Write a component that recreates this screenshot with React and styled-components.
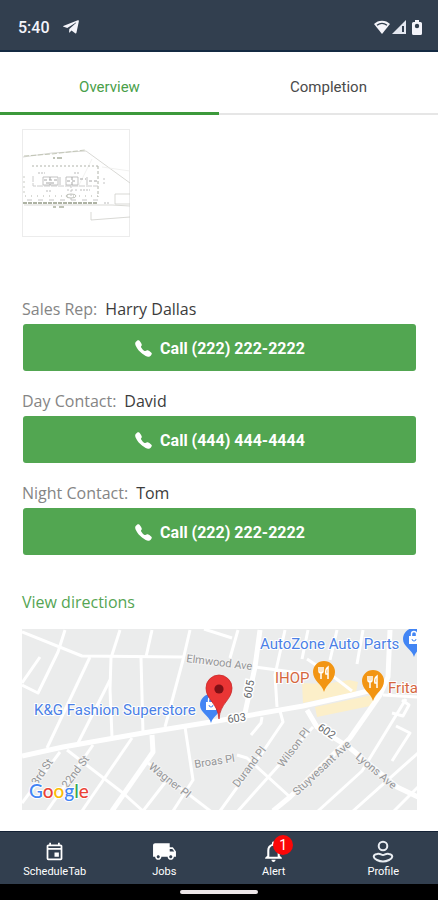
import React, { useState } from 'react'
import styled, { createGlobalStyle } from 'styled-components'
import { FaTelegramPlane } from 'react-icons/fa'
import { IoCall } from 'react-icons/io5'
import { MdOutlineEvent, MdLocalShipping, MdNotificationsNone } from 'react-icons/md'

const contacts = [
  { label: 'Sales Rep:', name: 'Harry Dallas', phone: '(222) 222-2222' },
  { label: 'Day Contact:', name: 'David', phone: '(444) 444-4444' },
  { label: 'Night Contact:', name: 'Tom', phone: '(222) 222-2222' },
]

const tabs = ['Overview', 'Completion']

const streets = [
  '0,3 60,27 161,28',
  '43,1 36,23 16,64 0,56',
  '18,28 0,54',
  '68,28 25,119',
  '98,1 89,29 88,60 90,108',
  '88,51 56,114',
  '130,1 124,28',
  '119,29 121,104',
  '168,1 161,31 143,98',
  '45,121 101,164 121,182',
  '38,123 0,174',
  '71,116 25,182',
  '110,109 60,182',
  '145,151 121,182',
  '163,98 171,151 151,182',
  '126,134 191,184',
  '182,0 210,9',
  '216,1 208,29',
  '233,38 285,45',
  '263,1 253,46 255,78',
  '286,1 280,30',
  '315,1 308,31',
  '341,1 335,35',
  '285,30 312,48 330,62',
  '361,66 396,68',
  '240,88 239,94 229,106',
  '258,82 261,93 240,124 198,182',
  '291,98 216,182',
  '215,126 225,129 268,168',
  '380,71 387,76 381,87 370,84',
  '374,97 388,104 370,132',
  '384,70 340,142 296,182',
  '396,124 331,182',
  '396,158 372,182',
]

const mainRoads = [
  '0,127 41,118 121,104 195,92 281,77 330,66 362,58',
  '238,1 233,38 223,84',
  '130,106 131,123 90,182',
  '368,1 366,48 358,66 328,109 268,168 251,182',
  '285,81 295,98 328,119 375,158 396,168',
]

function WifiIcon() {
  return (
    <svg width="16" height="14" viewBox="0 0 16 14" aria-hidden="true">
      <path d="M0 4C4-.5 12-.5 16 4L8 14Z" fill="#f4f4fa" />
      <path d="M3 5.2C6 3 10 3 13 5.2" fill="none" stroke="#323f4f" strokeWidth="1.4" />
    </svg>
  )
}

function SignalIcon() {
  return (
    <svg width="14" height="14" viewBox="0 0 14 14" aria-hidden="true">
      <path d="M0 14L14 0V14Z" fill="#e4e7f0" />
      <path d="M10 6h2v6h-2z" fill="#323f4f" />
    </svg>
  )
}

function BatteryIcon() {
  return (
    <svg width="10" height="15" viewBox="0 0 10 15" aria-hidden="true">
      <path d="M3 0h4v2h1.5Q10 2 10 3.5V13.5Q10 15 8.5 15h-7Q0 15 0 13.5V3.5Q0 2 1.5 2H3Z" fill="#f4f4fa" />
      <circle cx="5" cy="6" r="2.2" fill="#323f4f" />
    </svg>
  )
}

function ProfileIcon() {
  return (
    <svg width="22" height="24" viewBox="0 0 22 24" fill="none" stroke="#e9edf2" strokeWidth="2" aria-hidden="true">
      <circle cx="11" cy="6" r="4.3" />
      <path d="M5 14C8 13 9 15 11 15S14 13 17 14C22 15 20.5 18.5 17 20Q11 23 5 20C1.5 18.5 0 15 5 14Z" />
    </svg>
  )
}

function SitePlan() {
  return (
    <Plan viewBox="0 0 108 108" role="img" aria-label="Site plan">
      <rect x=".5" y=".5" width="107" height="107" fill="#fff" stroke="#ececec" />
      <g fill="none" stroke="#cfcfca" strokeWidth=".8">
        <path d="M1 28L30 24L64 22L108 54" />
        <path d="M2 27L30 25L63 21" stroke="#b8bda9" strokeDasharray="5 2" />
        <path d="M70 30L56 58M80 38L108 42" stroke="#eeeeec" />
        <path d="M93 75V65H108M93 75H108" />
        <path d="M69 83V91L108 88" />
        <path d="M2 76H90L108 77" />
      </g>
      <g fill="none" stroke="#b0b3aa" strokeWidth="1">
        <path d="M10 37H76" strokeDasharray="2 2" />
        <path d="M76 37V68" strokeDasharray="3 2" />
        <path d="M2 47V67" stroke="#c9cbc4" strokeDasharray="2 3" />
        <path d="M3 67H76" strokeDasharray="1 5" />
        <path d="M1 74H76" stroke="#949a87" strokeWidth="1.5" strokeDasharray="4 1" />
        <path d="M5 71H76" stroke="#c4c4c4" strokeDasharray="5 6" />
        <path d="M11 47V57H76" stroke="#ccc" strokeDasharray="6 1" />
        <path d="M21 48H36V56H21ZM44 48H56V56H44ZM38 48V56M65 48V56" stroke="#b4b4b4" strokeWidth=".8" />
        <path d="M22 51H35M24 54H34M28 48V56M45 52H55M50 48V56M58 50H64M67 52H75" stroke="#a6a6a6" strokeDasharray="3 2" />
        <path d="M16 44H23M52 44H57M24 62H30M58 61H68M82 74H88" stroke="#bbb" strokeDasharray="2 1" />
        <path d="M31 29H33M35 29H40M31 78H34M37 78H42" stroke="#aab09e" strokeWidth="1.5" />
        <ellipse cx="49" cy="67" rx="5" ry="2" strokeWidth=".8" />
        <path d="M49 57V72M45 61H55M82 49V55" stroke="#c4c4c4" strokeDasharray="2 2" />
      </g>
    </Plan>
  )
}

function FoodPin({ x, y }) {
  return (
    <g transform={`translate(${x} ${y})`}>
      <path d="M0 0C-2-8-11-11-11-20A11 11 0 0 1 11-20C11-11 2-8 0 0Z" fill="#f29513" />
      <path d="M-5-25v4q0 2 2 2v6M-3-25v6M-1-25v4q0 2-2 2M4-13v-12q-3 2-2 7h2" fill="none" stroke="#fff" strokeWidth="1.5" />
    </g>
  )
}

function ShopPin({ x, y }) {
  return (
    <g transform={`translate(${x} ${y})`}>
      <path d="M0 0C-2-8-11-10-11-18A11 11 0 0 1 11-18C11-10 2-8 0 0Z" fill="#4285f4" />
      <path d="M-5-21H5V-13H-5Z" fill="#fff" />
      <path d="M-2.5-21v-2a2.5 2.5 0 0 1 5 0v2" fill="none" stroke="#fff" strokeWidth="1.4" />
      <path d="M-2-18a2 2 0 0 0 4 0" fill="none" stroke="#4285f4" />
    </g>
  )
}

function DirectionsMap() {
  return (
    <MapCanvas viewBox="0 0 395 181" role="img" aria-label="Map of the job site">
      <rect width="395" height="181" fill="#ebecec" />
      <g fill="#fcefc9">
        <path d="M280 54L303 55L327 51L336 53L334 63L281 74Z" />
        <path d="M293 78L355 65L353 76L295 88Z" />
      </g>
      <g fill="none" stroke="#fff" strokeLinejoin="round">
        {streets.map((points) => <polyline key={points} points={points} strokeWidth="3" />)}
        {mainRoads.map((points) => <polyline key={points} points={points} strokeWidth="5" />)}
      </g>

      <StreetName x="164" y="33" transform="rotate(7 164 33)">Elmwood Ave</StreetName>
      <StreetName x="173" y="139" transform="rotate(-9 173 139)">Broas Pl</StreetName>
      <StreetName x="126" y="139" transform="rotate(38 126 139)">Wagner Pl</StreetName>
      <StreetName x="216" y="159" transform="rotate(-53 216 159)">Durand Pl</StreetName>
      <StreetName x="261" y="139" transform="rotate(-53 261 139)">Wilson Pl</StreetName>
      <StreetName x="275" y="167" transform="rotate(-43 275 167)">Stuyvesant Ave</StreetName>
      <StreetName x="333" y="129" transform="rotate(40 333 129)">Lyons Ave</StreetName>
      <StreetName x="15" y="157" transform="rotate(-56 15 157)">3rd St</StreetName>
      <StreetName x="45" y="160" transform="rotate(-53 45 160)">22nd St</StreetName>
      <RouteName x="229" y="70" transform="rotate(-80 229 70)">605</RouteName>
      <RouteName x="206" y="94" transform="rotate(-8 206 94)">603</RouteName>
      <RouteName x="295" y="100" transform="rotate(35 295 100)">602</RouteName>

      <PlaceName x="12" y="86">K&amp;G Fashion Superstore</PlaceName>
      <PlaceName x="238" y="20">AutoZone Auto Parts</PlaceName>
      <PlaceName $food x="253" y="54">IHOP</PlaceName>
      <PlaceName $food x="366" y="64">Frita</PlaceName>

      <ShopPin x={189} y={94} />
      <ShopPin x={392} y={28} />
      <FoodPin x={302} y={63} />
      <FoodPin x={351} y={72} />
      <path d="M197 90C196 74 184 71 184 59A13 13 0 0 1 210 59C210 71 198 74 197 90Z" fill="#ea3535" stroke="#c92a2a" strokeWidth=".8" />
      <circle cx="197" cy="60" r="4.6" fill="#7f1016" />

      <LogoText x="7" y="169">
        <tspan fill="#4285f4">G</tspan>
        <tspan fill="#ea4335">o</tspan>
        <tspan fill="#fbbc05">o</tspan>
        <tspan fill="#4285f4">g</tspan>
        <tspan fill="#34a853">l</tspan>
        <tspan fill="#ea4335">e</tspan>
      </LogoText>
    </MapCanvas>
  )
}

function App() {
  const [activeTab, setActiveTab] = useState('Overview')

  return (
    <Screen>
      <GlobalStyle />
      <StatusBar>
        <Clock>5:40</Clock>
        <FaTelegramPlane size={18} />
        <StatusIcons>
          <WifiIcon />
          <SignalIcon />
          <BatteryIcon />
        </StatusIcons>
      </StatusBar>

      <Tabs role="tablist">
        {tabs.map((tab) => (
          <Tab key={tab} role="tab" aria-selected={tab === activeTab} $active={tab === activeTab} onClick={() => setActiveTab(tab)}>
            {tab}
          </Tab>
        ))}
      </Tabs>

      <Content>
        <SitePlan />
        <Contacts>
          {contacts.map((contact) => (
            <Contact key={contact.label}>
              <ContactLine>
                <ContactLabel>{contact.label}</ContactLabel>
                <ContactName>{contact.name}</ContactName>
              </ContactLine>
              <CallButton type="button">
                <IoCall size={19} />
                Call {contact.phone}
              </CallButton>
            </Contact>
          ))}
        </Contacts>
        <DirectionsLink href="#directions">View directions</DirectionsLink>
        <DirectionsMap />
      </Content>

      <BottomNav>
        <NavItem type="button">
          <NavIcon><MdOutlineEvent size={21} /></NavIcon>
          ScheduleTab
        </NavItem>
        <NavItem type="button">
          <NavIcon><MdLocalShipping size={25} /></NavIcon>
          Jobs
        </NavItem>
        <NavItem type="button">
          <NavIcon>
            <MdNotificationsNone size={25} />
            <Badge>1</Badge>
          </NavIcon>
          Alert
        </NavItem>
        <NavItem type="button">
          <NavIcon><ProfileIcon /></NavIcon>
          Profile
        </NavItem>
      </BottomNav>
      <GestureBar>
        <GestureHandle />
      </GestureBar>
    </Screen>
  )
}

export default App

const GlobalStyle = createGlobalStyle`
  * {
    box-sizing: border-box;
  }
  body {
    margin: 0;
    background: #fff;
    font-family: Roboto, sans-serif;
  }
  button {
    border: 0;
    margin: 0;
    padding: 0;
    font-family: Roboto, sans-serif;
    cursor: pointer;
  }
`
const Screen = styled.div`
  display: flex;
  flex-direction: column;
  min-height: 100vh;
`
const StatusBar = styled.header`
  display: flex;
  align-items: center;
  gap: 12px;
  height: 52px;
  padding: 4px 16px 0 18px;
  color: #f4f4fa;
  background: #323f4f;
  border-bottom: 2px solid #142a43;
`
const Clock = styled.span`
  font-size: 16px;
  font-weight: 500;
`
const StatusIcons = styled.div`
  display: flex;
  align-items: center;
  gap: 2px;
  margin-left: auto;
  svg:last-child {
    margin-left: 4px;
  }
`
const Tabs = styled.div`
  display: flex;
  height: 63px;
`
const Tab = styled.button`
  flex: 1;
  padding-top: 6px;
  font-size: 15px;
  color: ${props => props.$active ? '#4aa04a' : '#4a4a4a'};
  background: none;
  box-shadow: inset 0 ${props => props.$active ? '-3px #3c993b' : '-2px #e6e6e6'};
`
const Content = styled.main`
  display: flex;
  flex: 1;
  flex-direction: column;
  padding: 14px 21px 20px 22px;
  font-family: "Open Sans", sans-serif;
`
const Plan = styled.svg`
  width: 108px;
  height: 108px;
`
const Contacts = styled.section`
  display: flex;
  flex-direction: column;
  gap: 19px;
  margin: 61px 0 36px;
`
const Contact = styled.div`
  display: flex;
  flex-direction: column;
  gap: 4px;
`
const ContactLine = styled.div`
  display: flex;
  gap: 8px;
  font-size: 16px;
  line-height: 22px;
`
const ContactLabel = styled.span`
  color: #858585;
`
const ContactName = styled.span`
  color: #3c3c3c;
`
const CallButton = styled.button`
  display: flex;
  align-items: center;
  justify-content: center;
  gap: 7px;
  height: 47px;
  margin: 0 1px;
  padding-top: 2px;
  border-radius: 3px;
  color: #fff;
  background: #52a651;
  font-size: 16px;
  font-weight: 700;
`
const DirectionsLink = styled.a`
  align-self: flex-start;
  margin-bottom: 16px;
  font-size: 16px;
  line-height: 22px;
  color: #55a554;
  text-decoration: none;
`
const MapCanvas = styled.svg`
  display: block;
  width: 100%;
  font-family: Roboto, sans-serif;
`
const StreetName = styled.text`
  font-size: 11px;
  fill: #939597;
  stroke: #f3f3f3;
  stroke-width: 2px;
  paint-order: stroke;
`
const RouteName = styled.text`
  font-size: 11px;
  fill: #66696c;
  stroke: #fff;
  stroke-width: 3px;
  paint-order: stroke;
`
const PlaceName = styled.text`
  font-size: 15px;
  fill: ${props => props.$food ? '#d5673f' : '#4b7fe6'};
  stroke: #fff;
  stroke-width: 2px;
  paint-order: stroke;
`
const LogoText = styled.text`
  font-family: Lato, sans-serif;
  font-size: 19px;
  font-weight: 500;
  stroke: #fff;
  stroke-width: 2px;
  paint-order: stroke;
`
const BottomNav = styled.nav`
  display: flex;
  height: 53px;
  background: #323f4f;
  border-top: 1px solid #142236;
`
const NavItem = styled.button`
  display: flex;
  flex: 1;
  flex-direction: column;
  align-items: center;
  padding-top: 6px;
  font-size: 11px;
  line-height: 14px;
  font-weight: 400;
  color: #fff;
  background: none;
`
const NavIcon = styled.span`
  position: relative;
  display: flex;
  align-items: center;
  justify-content: center;
  height: 27px;
`
const Badge = styled.span`
  position: absolute;
  top: -3px;
  left: 12px;
  width: 20px;
  height: 20px;
  border-radius: 50%;
  font-size: 14px;
  line-height: 20px;
  font-weight: 400;
  text-align: center;
  background: #fb0707;
`
const GestureBar = styled.footer`
  display: flex;
  align-items: center;
  justify-content: center;
  height: 16px;
  background: #000;
`
const GestureHandle = styled.div`
  width: 78px;
  height: 4px;
  border-radius: 2px;
  background: #ece6e8;
`
